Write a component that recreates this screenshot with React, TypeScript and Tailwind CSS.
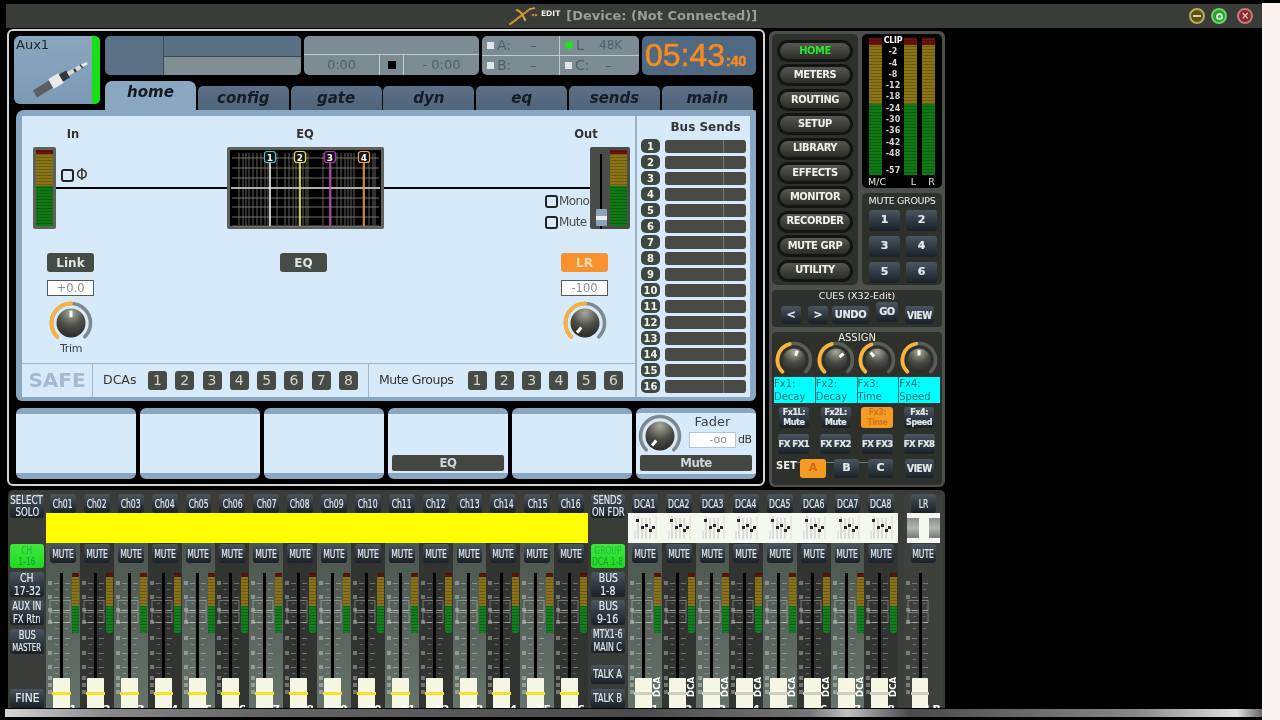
import React from "react";

const btn = "flex items-center justify-center rounded-[3px] bg-linear-to-b from-[#4a5660] to-[#1a2027] text-[#e3e8ea] text-center [-webkit-text-stroke:0.2px_#e3e8ea]";
const narrow = "scale-x-[0.64] whitespace-nowrap";
const cond = "font-stretch-condensed tracking-[-0.4px] whitespace-nowrap";
const greyBlock = "bg-linear-to-b from-[#8a8f8c] via-[#b3b6b0] to-[#777b78]";

function polar(c: number, r: number, deg: number) {
    const a = ((deg - 90) * Math.PI) / 180;
    return { x: c + r * Math.cos(a), y: c + r * Math.sin(a) };
}

function arc(c: number, r: number, from: number, to: number) {
    const p1 = polar(c, r, from);
    const p2 = polar(c, r, to);
    const large = to - from > 180 ? 1 : 0;
    return `M${p1.x} ${p1.y}A${r} ${r} 0 ${large} 1 ${p2.x} ${p2.y}`;
}

function Knob({ size = 44, pointer, orangeTo, track = "#7f8a8e" }: { size?: number; pointer: number; orangeTo?: number; track?: string }) {
    const c = size / 2;
    const outer = c - 2.5;
    const inner = outer - 5;
    const p1 = polar(c, inner * 0.4, pointer);
    const p2 = polar(c, inner * 0.85, pointer);
    return (
        <svg width={size} height={size} viewBox={`0 0 ${size} ${size}`} className="block shrink-0">
            <defs>
                <radialGradient id="knobFill" cx="50%" cy="15%" r="85%">
                    <stop offset="0%" stopColor="#a9a99b" />
                    <stop offset="55%" stopColor="#4b4c46" />
                    <stop offset="100%" stopColor="#2a2b28" />
                </radialGradient>
            </defs>
            <path d={arc(c, outer, -135, 135)} fill="none" stroke={track} strokeWidth={3.6} strokeLinecap="round" />
            {orangeTo !== undefined && <path d={arc(c, outer, -135, orangeTo)} fill="none" stroke="#f8b33e" strokeWidth={3.8} strokeLinecap="round" />}
            <circle cx={c} cy={c} r={inner} fill="url(#knobFill)" />
            <line x1={p1.x} y1={p1.y} x2={p2.x} y2={p2.y} stroke="#fff" strokeWidth={3} />
        </svg>
    );
}

function MeterBar({ className, low }: { className: string; low?: boolean }) {
    return (
        <div className={`relative ${className} ${low ? "bg-[linear-gradient(#5e140c_0_7%,#8a7416_7%_55%,#12801c_55%_100%)]" : "bg-[linear-gradient(#6b120c_0_5%,#8a7416_5%_48%,#0f7a14_48%_100%)]"}`}>
            <div className="absolute inset-0 bg-[repeating-linear-gradient(0deg,transparent_0_2px,rgba(0,0,0,0.22)_2px_3px)]" />
        </div>
    );
}

function Jack() {
    return (
        <svg width="60" height="44" viewBox="0 0 60 44" className="block">
            <line x1="5" y1="40" x2="21" y2="30" stroke="#5a5f62" strokeWidth="8" />
            <line x1="21" y1="30" x2="31" y2="24" stroke="#e9ebeb" strokeWidth="11" />
            <line x1="31" y1="24" x2="38" y2="20" stroke="#34383a" strokeWidth="8" />
            <line x1="38" y1="20" x2="50" y2="13" stroke="#d8dadb" strokeWidth="4" />
            <line x1="50" y1="13" x2="57" y2="9" stroke="#eceded" strokeWidth="3" />
            <line x1="44" y1="17" x2="46" y2="16" stroke="#333" strokeWidth="4" />
            <line x1="51" y1="13" x2="52" y2="12" stroke="#333" strokeWidth="4" />
        </svg>
    );
}

function Logo() {
    return (
        <svg width="30" height="18" viewBox="0 0 30 18" className="block">
            <path d="M1 17C7 13 14 7 21 2" fill="none" stroke="#c8922e" strokeWidth="2" strokeLinecap="round" />
            <path d="M8 3C12 4 14 8 16 13" fill="none" stroke="#d89f35" strokeWidth="2.2" strokeLinecap="round" />
            <path d="M21 2L26 1" stroke="#e0a83c" strokeWidth="1.4" />
            <circle cx="24" cy="8" r="1.3" fill="#b88a3a" />
            <circle cx="27" cy="8" r="1.3" fill="#b88a3a" />
        </svg>
    );
}

function EqGraph() {
    const hLines = [8, 18, 28, 48, 57, 67, 76];
    const vLines = [12, 16, 19, 22, 26, 30, 34, 38, 41, 50, 58, 62, 66, 69, 72, 76, 79, 81, 96, 104, 110, 114, 118, 121, 124, 127, 136, 142, 146, 148];
    const bands = [
        { x: 43, n: "1", box: "#3cc8d0", line: "#f4f4f0" },
        { x: 73, n: "2", box: "#e8df4a", line: "#f0ec50" },
        { x: 103, n: "3", box: "#c030c0", line: "#d040d0" },
        { x: 137, n: "4", box: "#f5a34c", line: "#f59a30" },
    ];
    return (
        <svg width="157" height="82" viewBox="0 0 157 82" className="block shrink-0 rounded-[2px]">
            <rect width="157" height="82" fill="#5e615c" />
            <rect x="3" y="3" width="151" height="76" fill="#000" />
            {vLines.map((x) => (
                <line key={x} x1={x} y1="6" x2={x} y2="78" stroke="#77786a" strokeWidth="0.8" />
            ))}
            {hLines.map((y) => (
                <line key={y} x1="5" y1={y + 3} x2="152" y2={y + 3} stroke="#8d8e80" strokeWidth="0.8" />
            ))}
            <line x1="4" y1="41" x2="153" y2="41" stroke="#b0b0a6" strokeWidth="2" />
            {bands.map((b) => (
                <g key={b.n}>
                    <line x1={b.x} y1="14" x2={b.x} y2="79" stroke={b.line} strokeWidth="1.6" />
                    <rect x={b.x - 5.5} y="4.5" width="11" height="11" rx="2.5" fill="#111" stroke={b.box} strokeWidth="1.2" />
                    <text x={b.x} y="13.5" textAnchor="middle" fontSize="9" fontWeight="700" fill="#fff" fontFamily="DejaVu Sans, sans-serif">{b.n}</text>
                </g>
            ))}
        </svg>
    );
}

function NumBadge({ n }: { n: number }) {
    return <span className="flex h-[19px] w-[19px] items-center justify-center rounded-[3px] bg-[#474b46] text-[14px] text-[#d4d6cc]">{n}</span>;
}

function Card({ children }: { children?: React.ReactNode }) {
    return (
        <div className="flex h-[71px] w-[120px] flex-col justify-end rounded-[6px] border-y-[6px] border-y-[#8ba6c1] bg-[#d7eafa] px-[4px] pb-[2px]">
            {children}
        </div>
    );
}

function BarButton({ label }: { label: string }) {
    return <div className="flex h-[16px] w-[112px] items-center justify-center rounded-[2px] bg-[#44463f] text-[13px] font-bold tracking-[-0.5px] text-[#cdd7dd] font-stretch-condensed">{label}</div>;
}

function MainPanel() {
    const tabs = ["config", "gate", "dyn", "eq", "sends", "main"];
    return (
        <div className="h-[457px] w-[758px] shrink-0 rounded-[6px] border-2 border-[#d0d5d5] bg-black pl-[5px] pt-[5px]">
            <div className="flex h-[74px]">
                <div className="flex h-[68px] w-[86px] rounded-[6px] bg-linear-to-b from-[#8ba6bf] to-[#7d9ab5]">
                    <div className="w-[78px] pl-[2px] pt-[1px]">
                        <div className="text-[13px] leading-[15px] text-[#1c242c]">Aux1</div>
                        <div className="ml-[14px] mt-[2px]"><Jack /></div>
                    </div>
                    <div className="w-[8px] rounded-r-[5px] bg-[#18e018]" />
                </div>
                <div className="ml-[5px] flex flex-col">
                    <div className="flex h-[39px] gap-[3px]">
                        <div className="flex w-[196px] overflow-hidden rounded-[5px] bg-[#5b7186]">
                            <div className="w-[58px]" />
                            <div className="flex flex-1 flex-col border-l border-[#3c4a58]">
                                <div className="h-[20px] bg-[#5a7085]" />
                                <div className="h-[1px] bg-[#3a4755]" />
                                <div className="flex-1 bg-[#808f94]" />
                            </div>
                        </div>
                        <div className="flex w-[175px] flex-col overflow-hidden rounded-[5px] bg-[#7b8d92]">
                            <div className="h-[19px] border-b border-[#c2caca]" />
                            <div className="flex flex-1 items-center text-[13px] text-[#525f63]">
                                <span className="w-[75px] text-center">0:00</span>
                                <span className="flex h-full w-[25px] items-center justify-center border-x border-[#c2caca]"><span className="h-[8px] w-[8px] bg-black" /></span>
                                <span className="flex-1 text-center">- 0:00</span>
                            </div>
                        </div>
                        <div className="grid w-[157px] grid-cols-[78px_1fr] grid-rows-2 overflow-hidden rounded-[5px] bg-[#7b8d92] text-[14px] text-[#4e6068]">
                            <div className="flex items-center gap-[3px] border-b border-r border-[#c2caca] pl-[5px]"><span className="h-[7px] w-[7px] bg-[#dfe5e8]" /><span className="w-[30px]">A:</span><span>–</span></div>
                            <div className="flex items-center gap-[3px] border-b border-[#c2caca] pl-[5px]"><span className="h-[8px] w-[8px] rounded-full bg-[#1fe01f]" /><span className="w-[20px]">L</span><span className="text-[12px]">48K</span></div>
                            <div className="flex items-center gap-[3px] border-r border-[#c2caca] pl-[5px]"><span className="h-[7px] w-[7px] bg-[#dfe5e8]" /><span className="w-[30px]">B:</span><span>–</span></div>
                            <div className="flex items-center gap-[3px] pl-[5px]"><span className="h-[7px] w-[7px] bg-[#dfe5e8]" /><span className="w-[27px]">C:</span><span>–</span></div>
                        </div>
                        <div className="flex w-[114px] items-baseline rounded-[5px] bg-[#4f6982] pl-[3px] font-['Liberation_Sans',sans-serif] text-[32px] leading-[38px] text-[#fb8a1c] [-webkit-text-stroke:0.5px_#fb8a1c]">
                            05:43<span className="ml-[1px] text-[14px] font-bold">:40</span>
                        </div>
                    </div>
                    <div className="mt-[6px] flex h-[29px] items-end gap-[1.8px] text-[15px] font-bold italic">
                        <div className="flex h-[29px] w-[91px] items-center justify-center rounded-t-[7px] bg-[#8aa7c2] pb-[6px] text-[#15191f]">home</div>
                        {tabs.map((t) => (
                            <div key={t} className="flex h-[24px] w-[91px] items-center justify-center rounded-t-[5px] bg-linear-to-b from-[#5b7187] to-[#4f6479] text-[#141d27]">{t}</div>
                        ))}
                    </div>
                </div>
            </div>

            <div className="ml-[2px] flex h-[291px] w-[740px] rounded-b-[6px] rounded-tl-[8px] rounded-tr-[2px] bg-[#8aa7c2] pb-[4px] pl-[6px] pr-[6px] pt-[6px]">
                <div className="flex w-[613px] flex-col bg-[#d7eafa] text-[#333]">
                    <div className="h-[247px] pt-[10px]">
                        <div className="flex h-[16px] items-center text-[11.5px] font-bold leading-[16px]">
                            <span className="w-[102px] text-center">In</span>
                            <span className="ml-[130px] w-[102px] text-center">EQ</span>
                            <span className="ml-[190px] w-[80px] text-center">Out</span>
                        </div>
                        <div className="mt-[5px] flex h-[82px] items-center pl-[11px] pr-[5px]">
                            <div className="h-[82px] w-[23px] shrink-0 rounded-[2px] bg-[#5e615c] p-[3px]"><MeterBar className="h-full w-full" /></div>
                            <div className="relative h-[2px] w-[171px] bg-black">
                                <div className="absolute left-[5px] top-[-18px] flex items-center gap-[2px]">
                                    <span className="h-[13px] w-[13px] rounded-[3px] border-2 border-[#222]" />
                                    <span className="text-[15px] leading-[13px]">Φ</span>
                                </div>
                            </div>
                            <EqGraph />
                            <div className="relative h-[2px] w-[206px] bg-black">
                                <div className="absolute left-[161px] top-[8px] flex flex-col gap-[8px] text-[12px] leading-[13px] tracking-[-0.6px] text-[#4a4a4a]">
                                    <div className="flex items-center gap-px"><span className="h-[13px] w-[13px] rounded-[3px] border-2 border-[#222]" />Mono</div>
                                    <div className="flex items-center gap-px"><span className="h-[13px] w-[13px] rounded-[3px] border-2 border-[#222]" />Mute</div>
                                </div>
                            </div>
                            <div className="relative flex h-[82px] w-[40px] shrink-0 rounded-[2px] bg-[#4a4c48] pl-[10px] pr-[3px] pt-[3px]">
                                <div className="mt-[4px] h-[75px] w-[2px] bg-black" />
                                <div className="absolute left-[6px] top-[62px] flex h-[17px] w-[11px] items-center rounded-[1px] bg-[#8ba3bd]"><span className="h-[4px] w-full bg-[#e8eef4]" /></div>
                                <MeterBar className="ml-[8px] h-[76px] w-[17px]" />
                            </div>
                        </div>
                        <div className="mt-[24px] flex pl-[25px] text-[12px] font-bold">
                            <span className="flex h-[19px] w-[47px] items-center justify-center rounded-[3px] bg-[#474b46] text-[#dfe4e4]">Link</span>
                            <span className="ml-[186px] flex h-[19px] w-[47px] items-center justify-center rounded-[3px] bg-[#474b46] text-[#dfe4e4]">EQ</span>
                            <span className="ml-[234px] flex h-[19px] w-[47px] items-center justify-center rounded-[3px] bg-[#f8922e] text-[#fbd9b0]">LR</span>
                        </div>
                        <div className="mt-[8px] flex pl-[25px] text-[11.5px] leading-[14px] text-[#8a9096]">
                            <span className="h-[16px] w-[47px] border border-[#56595c] bg-white text-center">+0.0</span>
                            <span className="ml-[467px] h-[16px] w-[47px] border border-[#56595c] bg-white text-center">-100</span>
                        </div>
                        <div className="mt-[5px] flex pl-[27px]">
                            <div className="flex flex-col items-center">
                                <Knob pointer={0} orangeTo={0} />
                                <span className="-mt-[2px] text-[11px] leading-[12px] tracking-[-0.3px] text-[#3a4248]">Trim</span>
                            </div>
                            <div className="ml-[470px]"><Knob pointer={-140} orangeTo={0} /></div>
                        </div>
                    </div>
                    <div className="flex h-[34px] items-center border-t border-[#a0b6c9] text-[12.5px] text-[#333]">
                        <div className="h-full w-[70px] text-center text-[20px] font-bold leading-[33px] text-[#a4bad0]">SAFE</div>
                        <div className="flex h-full w-[277px] items-center border-x border-[#a0b6c9] pl-[10px] pr-[10px]">
                            DCAs
                            <div className="ml-auto flex gap-[8.3px]">{[1, 2, 3, 4, 5, 6, 7, 8].map((n) => <NumBadge key={n} n={n} />)}</div>
                        </div>
                        <div className="flex h-full flex-1 items-center pl-[10px] pr-[12px]">
                            <span className="tracking-[-0.5px]">Mute Groups</span>
                            <div className="ml-auto flex gap-[8.3px]">{[1, 2, 3, 4, 5, 6].map((n) => <NumBadge key={n} n={n} />)}</div>
                        </div>
                    </div>
                </div>
                <div className="w-[2px] bg-[#9ab3c9]" />
                <div className="flex-1 bg-[#d7eafa] pl-[4px] pt-[3px]">
                    <div className="pl-[20px] text-center text-[12px] font-bold leading-[17px] text-[#333]">Bus Sends</div>
                    <div className="mt-[3px] flex flex-col gap-[2px]">
                        {Array.from({ length: 16 }, (_, i) => (
                            <div key={i} className="flex h-[14px] items-center gap-[5px]">
                                <span className="flex h-[14px] w-[19px] items-center justify-center rounded-[5px] bg-[#3d4842] text-[10px] font-bold text-[#eef0ea]">{i + 1}</span>
                                <span className="flex h-[13px] w-[81px] justify-end rounded-[3px] bg-[#474a45] pr-[22px]"><span className="h-full w-px bg-[#75786f]" /></span>
                            </div>
                        ))}
                    </div>
                </div>
            </div>

            <div className="ml-[2px] mt-[7px] flex gap-[4px]">
                <Card />
                <Card />
                <Card />
                <Card><BarButton label="EQ" /></Card>
                <Card />
                <div className="flex h-[71px] w-[120px] flex-col rounded-[6px] border-y-[5px] border-y-[#8ba6c1] bg-[#d7eafa] px-[4px] pb-[2px]">
                    <div className="flex h-[42px]">
                        <div className="-ml-[2px] mt-[1px] h-[40px] overflow-hidden"><Knob size={44} pointer={-140} /></div>
                        <div className="ml-[7px] flex flex-col">
                            <span className="w-[47px] text-center text-[13px] leading-[17px] text-[#3a4046]">Fader</span>
                            <div className="mt-[2px] flex items-center gap-[2px]">
                                <span className="h-[16px] w-[47px] border border-[#b9c6d0] bg-white pr-[8px] text-right text-[11px] leading-[14px] text-[#8a8f92]">-oo</span>
                                <span className="text-[11px] tracking-[-0.5px] text-[#333]">dB</span>
                            </div>
                        </div>
                    </div>
                    <BarButton label="Mute" />
                </div>
            </div>
        </div>
    );
}

const navItems = ["HOME", "METERS", "ROUTING", "SETUP", "LIBRARY", "EFFECTS", "MONITOR", "RECORDER", "MUTE GRP", "UTILITY"];
const scaleLabels = ["-2", "-4", "-8", "-12", "-18", "-24", "-30", "-36", "-42", "-48"];

function ControlPanel() {
    return (
        <div className="ml-[4px] mt-[2px] h-[456px] w-[176px] shrink-0 rounded-[6px] bg-[#4b504b] p-[3px]">
            <div className="flex gap-[4px]">
                <div className="flex h-[251px] w-[86px] flex-col items-center gap-[2.4px] rounded-[5px] bg-[#2e302c] pt-[6px]">
                    {navItems.map((item, i) => (
                        <div key={item} className={`flex h-[22px] w-[76px] items-center justify-center rounded-[11px] border-[3px] border-[#141512] bg-linear-to-b from-[#565850] to-[#2b2c28] text-[11px] font-bold tracking-[-0.4px] font-stretch-condensed whitespace-nowrap ${i === 0 ? "text-[#29e82b]" : "text-[#f2f2ec]"}`}>{item}</div>
                    ))}
                </div>
                <div className="w-[80px]">
                    <div className="h-[154px] rounded-[5px] bg-black pl-[7px] pt-[4px]">
                        <div className="flex h-[137px]">
                            <MeterBar className="h-full w-[13px]" />
                            <div className="-mt-[3px] flex h-[140px] w-[22px] flex-col items-center text-[8px] font-bold leading-[11.3px] text-[#d6d8d0]">
                                <span className="text-[8px] tracking-[-0.3px] text-white">CLIP</span>
                                {scaleLabels.map((s) => <span key={s}>{s}</span>)}
                                <span className="mt-[6px]">-57</span>
                            </div>
                            <MeterBar className="h-full w-[13px]" />
                            <MeterBar className="ml-[5px] h-full w-[13px]" />
                        </div>
                        <div className="flex text-[9.5px] leading-[13px] text-[#e8e8e0]">
                            <span className="-ml-[1px] w-[20px]">M/C</span>
                            <span className="ml-[19px] w-[13px] text-center">L</span>
                            <span className="ml-[5px] w-[13px] text-center">R</span>
                        </div>
                    </div>
                    <div className="mt-[5px] h-[92px] rounded-[5px] bg-[#2e302c] pl-[7px]">
                        <div className="-ml-[6px] w-[78px] pt-[2px] text-center text-[9.5px] leading-[12px] tracking-[-0.3px] text-[#f0f0e8]">MUTE GROUPS</div>
                        <div className="mt-[3px] grid grid-cols-[31px_31px] gap-x-[6px] gap-y-[5px]">
                            {[1, 2, 3, 4, 5, 6].map((n) => <div key={n} className={`${btn} h-[21px] text-[11px] font-bold`}>{n}</div>)}
                        </div>
                    </div>
                </div>
            </div>

            <div className="mt-[5px] h-[37px] w-[170px] rounded-[4px] bg-[#2e302c]">
                <div className="text-center text-[9.5px] leading-[12px] text-[#f0f0e8]">CUES (X32-Edit)</div>
                <div className="flex h-[22px] items-end pl-[9px] text-[11px] font-bold">
                    <div className={`${btn} h-[18px] w-[20px]`}>&lt;</div>
                    <div className={`${btn} ml-[7px] h-[18px] w-[20px]`}>&gt;</div>
                    <div className={`${btn} ml-[4px] h-[18px] w-[37px] ${cond}`}>UNDO</div>
                    <div className={`${btn} ml-[7px] h-[20px] w-[22px] self-start ${cond}`}>GO</div>
                    <div className={`${btn} ml-[7px] h-[18px] w-[29px] ${cond} text-[10px]`}>VIEW</div>
                </div>
            </div>

            <div className="mt-[5px] h-[153px] w-[170px] rounded-[4px] bg-[#2e302c]">
                <div className="text-center text-[10px] leading-[12px] text-[#f0f0e8]">ASSIGN</div>
                <div className="-mt-[3px] grid h-[36px] w-[168px] grid-cols-4 justify-items-center overflow-hidden pl-[1px]">
                    <Knob size={38} pointer={20} orangeTo={-15} track="#5a5c58" />
                    <Knob size={38} pointer={50} orangeTo={-15} track="#5a5c58" />
                    <Knob size={38} pointer={-40} orangeTo={-20} track="#5a5c58" />
                    <Knob size={38} pointer={0} orangeTo={-10} track="#5a5c58" />
                </div>
                <div className="mx-[2px] grid h-[26px] w-[166px] grid-cols-4 gap-x-px bg-[#1a6a70] text-[10px] leading-[13px] text-[#137079]">
                    {[["Fx1:", "Decay"], ["Fx2:", "Decay"], ["Fx3:", "Time"], ["Fx4:", "Speed"]].map(([a, b]) => (
                        <div key={a} className="bg-[#00ffff]"><div>{a}</div><div>{b}</div></div>
                    ))}
                </div>
                <div className="mt-[4px] grid w-[168px] grid-cols-4 justify-items-center pl-[1px] text-[8px] font-bold leading-[10px] tracking-[-0.4px]">
                    <div className={`${btn} h-[21px] w-[30px] flex-col`}><span>Fx1L:</span><span>Mute</span></div>
                    <div className={`${btn} h-[21px] w-[30px] flex-col`}><span>Fx2L:</span><span>Mute</span></div>
                    <div className="flex h-[21px] w-[32px] flex-col items-center justify-center rounded-[3px] bg-[#f59a23] text-[#cc7a1c]"><span>Fx3:</span><span>Time</span></div>
                    <div className={`${btn} h-[21px] w-[30px] flex-col`}><span>Fx4:</span><span>Speed</span></div>
                </div>
                <div className="mt-[6px] grid w-[168px] grid-cols-4 justify-items-center pl-[1px] text-[9.5px] font-bold tracking-[-0.5px]">
                    {["FX FX1", "FX FX2", "FX FX3", "FX FX8"].map((t) => <div key={t} className={`${btn} h-[20px] w-[31px] whitespace-nowrap font-stretch-condensed`}>{t}</div>)}
                </div>
                <div className="mt-[5px] flex items-center text-[11px] font-bold">
                    <span className="ml-[4px] w-[20px] self-start text-[10px] leading-[13px] text-[#eeeeea]">SET</span>
                    <span className="-mt-[12px] h-px w-[4px] bg-[#777]" />
                    <div className="flex h-[19px] w-[26px] items-center justify-center rounded-[3px] bg-[#f59a23] text-[#c9691c]">A</div>
                    <span className="-mt-[12px] h-px w-[8px] bg-[#777]" />
                    <div className={`${btn} h-[19px] w-[25px]`}>B</div>
                    <span className="-mt-[12px] h-px w-[9px] bg-[#777]" />
                    <div className={`${btn} h-[19px] w-[25px]`}>C</div>
                    <div className={`${btn} ml-[12px] h-[19px] w-[29px] text-[10px] ${cond}`}>VIEW</div>
                </div>
            </div>
        </div>
    );
}

function Scale() {
    const ys = [20, 34, 47, 59, 75, 90, 104, 115, 122, 129];
    return (
        <svg width="34" height="145" viewBox="0 0 34 145" className="pointer-events-none absolute left-0 top-0">
            <g fill="#ffffff" opacity="0.32">
                {ys.map((y) => (
                    <g key={y}>
                        <rect x="2" y={y - 2} width="4" height="4" />
                        <rect x="8" y={y} width="5" height="1" />
                        <rect x="19" y={y} width="5" height="1" />
                        <rect x="9" y={y + 6} width="3" height="1" opacity="0.7" />
                        <rect x="19" y={y + 6} width="3" height="1" opacity="0.7" />
                    </g>
                ))}
            </g>
            <g fill="none" stroke="#ffffff" opacity="0.32">
                <rect x="4" y="37.5" width="20" height="10" />
                <rect x="4" y="49.5" width="20" height="10" />
            </g>
        </svg>
    );
}

function Strip({ label, n, kind, light }: { label: string; n: string; kind: "ch" | "dca"; light: boolean }) {
    return (
        <div className="flex min-w-0 flex-1 flex-col">
            <div className={`${btn} mx-[4px] h-[19px] text-[12px]`}><span className={narrow}>{label}</span></div>
            {kind === "ch" ? (
                <div className="h-[30px] bg-[#ffff00]" />
            ) : (
                <div className="h-[30px] bg-[#f5f8ee]">
                    <svg width="34" height="30" viewBox="0 0 34 30" className="block">
                        <g stroke="#9aa0a0" strokeWidth="0.6">
                            <line x1="10" y1="3" x2="10" y2="26" />
                            <line x1="14" y1="5" x2="14" y2="26" />
                            <line x1="18" y1="5" x2="18" y2="26" />
                            <line x1="22" y1="5" x2="22" y2="26" />
                            <line x1="7" y1="18" x2="7" y2="26" stroke="#9db8e0" />
                            <line x1="28" y1="3" x2="28" y2="26" stroke="#c8d0c8" />
                        </g>
                        <g fill="#2b2b2b">
                            <rect x="8" y="6" width="3" height="3" />
                            <rect x="13" y="13" width="3" height="3" />
                            <rect x="17" y="11" width="3" height="3" />
                            <rect x="21" y="16" width="3" height="3" />
                            <rect x="24" y="13" width="3" height="3" />
                        </g>
                    </svg>
                </div>
            )}
            <div className={`flex flex-1 flex-col ${light ? "bg-linear-to-b from-[#4c564f] to-[#66736a]" : "bg-[#323431]"}`}>
                <div className={`${btn} mx-[4px] mt-[1px] h-[19px] text-[12px]`}><span className={narrow}>MUTE</span></div>
                <div className="relative flex h-[145px] overflow-hidden pt-[10px]">
                    <Scale />
                    <div className="relative ml-[14px] h-[105px] w-[3px] shrink-0 bg-black" />
                    <div className="relative ml-[9px] h-[60px] w-[7px] shrink-0 overflow-hidden rounded-[2px] bg-black">
                        <MeterBar low className="h-full w-full" />
                    </div>
                    <div className="absolute bottom-0 left-[7px] h-[30px] w-[17px] rounded-t-[1px] bg-[#f6f6e4]">
                        <div className={`absolute left-[-1px] right-[-1px] top-[14px] h-[3px] ${kind === "ch" ? "bg-[#f2e22a]" : "bg-[#cfcfc0]"}`} />
                    </div>
                    {kind === "dca" && (
                        <span className="absolute bottom-[11px] left-[25px] text-[8.5px] font-bold leading-[9px] text-white [writing-mode:vertical-rl] rotate-180">DCA</span>
                    )}
                    <span className="absolute bottom-[-8px] right-[3px] text-[11px] font-bold leading-[12px] text-white">{n}</span>
                </div>
            </div>
        </div>
    );
}

function SideBtn({ top, bottom, className = "", scale = "scale-x-[0.78]", bottomClass = "" }: { top: string; bottom?: string; className?: string; scale?: string; bottomClass?: string }) {
    return (
        <div className={`${btn} w-[34px] flex-col text-[12px] leading-[12.5px] ${className}`}>
            <span className={`${scale} whitespace-nowrap`}>{top}</span>
            {bottom && <span className={`${scale} whitespace-nowrap ${bottomClass}`}>{bottom}</span>}
        </div>
    );
}

function GreenBtn({ top, bottom }: { top: string; bottom: string }) {
    return (
        <div className="flex h-[24px] w-[34px] flex-col items-center justify-center rounded-[3px] bg-linear-to-b from-[#3cea3c] to-[#1fd820] text-[10.5px] leading-[11.5px]">
            <span className="scale-x-[0.72] whitespace-nowrap text-[#2cae44]">{top}</span>
            <span className="scale-x-[0.72] whitespace-nowrap text-[#169a3a]">{bottom}</span>
        </div>
    );
}

function Mixer() {
    const chs = Array.from({ length: 16 }, (_, i) => i + 1);
    const dcas = [1, 2, 3, 4, 5, 6, 7, 8];
    return (
        <div className="ml-[2px] mt-[2px] flex h-[218px] w-[937px] rounded-t-[5px] bg-[#3a3c38] pt-[4px]">
            <div className="flex w-[38px] shrink-0 flex-col pl-[2px]">
                <SideBtn top="SELECT" bottom="SOLO" scale="scale-x-[0.72]" className="h-[24px] text-[11.5px]" />
                <div className="mt-[26px]"><GreenBtn top="CH" bottom="1-16" /></div>
                <SideBtn top="CH" bottom="17-32" className="mt-[4px] h-[25px]" />
                <SideBtn top="AUX IN" bottom="FX Rtn" scale="scale-x-[0.7]" className="mt-[3px] h-[25px] text-[11px]" />
                <SideBtn top="BUS" bottom="MASTER" bottomClass="text-[10px]" scale="scale-x-[0.7]" className="mt-[4px] h-[25px]" />
                <SideBtn top="FINE" scale="scale-x-[0.9]" className="mt-auto h-[19px] text-[11.5px]" />
            </div>
            <div className="flex w-[542px] shrink-0">
                {chs.map((n) => <Strip key={n} label={`Ch${String(n).padStart(2, "0")}`} n={String(n)} kind="ch" light={n % 2 === 1} />)}
            </div>
            <div className="flex w-[40px] shrink-0 flex-col items-center">
                <SideBtn top="SENDS" bottom="ON FDR" scale="scale-x-[0.7]" className="h-[24px] text-[11.5px]" />
                <div className="mt-[26px]"><GreenBtn top="GROUP" bottom="DCA 1-8" /></div>
                <SideBtn top="BUS" bottom="1-8" className="mt-[4px] h-[25px]" />
                <SideBtn top="BUS" bottom="9-16" className="mt-[3px] h-[25px]" />
                <SideBtn top="MTX1-6" bottom="MAIN C" scale="scale-x-[0.65]" className="mt-[3px] h-[25px] text-[11px]" />
                <SideBtn top="TALK A" scale="scale-x-[0.7]" className="mt-auto h-[19px] text-[11.5px]" />
                <SideBtn top="TALK B" scale="scale-x-[0.7]" className="mt-[5px] h-[19px] text-[11.5px]" />
            </div>
            <div className="flex w-[270px] shrink-0">
                {dcas.map((n) => <Strip key={n} label={`DCA${n}`} n={String(n)} kind="dca" light={n % 2 === 1} />)}
            </div>
            <div className="ml-[6px] flex w-[39px] shrink-0 flex-col rounded-t-[4px] bg-[#3e403c]">
                <div className={`${btn} mx-[7px] h-[19px] text-[12px]`}><span className={narrow}>LR</span></div>
                <div className="mx-[3px] flex h-[30px] justify-between bg-[#f5f8ee] py-[5px]">
                    <div className={`w-[12px] ${greyBlock}`} />
                    <div className={`w-[11px] ${greyBlock}`} />
                </div>
                <div className={`${btn} mx-[7px] mt-[1px] h-[19px] text-[12px]`}><span className={narrow}>MUTE</span></div>
                <div className="relative flex h-[145px] overflow-hidden pt-[10px]">
                    <Scale />
                    <div className="relative ml-[15px] h-[105px] w-[3px] bg-black" />
                    <div className="absolute bottom-0 left-[8px] h-[30px] w-[16px] rounded-t-[1px] bg-[#f6f6e4]">
                        <div className="absolute left-[-1px] right-[-1px] top-[14px] h-[3px] bg-[#cfcfc0]" />
                    </div>
                    <span className="absolute bottom-[-8px] right-[2px] text-[11px] font-bold leading-[12px] text-white">LR</span>
                </div>
            </div>
        </div>
    );
}

export default function App() {
    return (
        <div className="flex h-[720px] w-[1280px] overflow-hidden bg-black font-['DejaVu_Sans',sans-serif] blur-[0.45px]">
            <div className="w-[1262px] shrink-0 pt-[4px]">
                <div className="ml-[6px] flex h-[24px] w-[1256px] items-center bg-[#3a3c38]">
                    <div className="ml-[503px]"><Logo /></div>
                    <span className="ml-[2px] -mt-[4px] text-[7.5px] font-bold text-[#f2f2ec]">EDIT</span>
                    <span className="ml-[6px] text-[13px] font-bold text-[#9a9e98]">[Device: (Not Connected)]</span>
                    <div className="ml-[432px] flex items-center">
                        <span className="flex h-[16px] w-[16px] items-center justify-center rounded-full border-2 border-[#b5ac5f] bg-[#5a5410]"><span className="h-[2px] w-[8px] bg-[#d8d2a0]" /></span>
                        <span className="ml-[6px] flex h-[16px] w-[16px] items-center justify-center rounded-full border-2 border-[#6fd06f] bg-[#2f9a2f]"><span className="h-[7px] w-[7px] rounded-full border-2 border-[#bdf0bd]" /></span>
                        <span className="ml-[10px] flex h-[16px] w-[16px] items-center justify-center rounded-full border-2 border-[#c87878] bg-[#8a2a30] text-[10px] font-bold leading-none text-[#f0c0c0]">×</span>
                    </div>
                </div>
                <div className="ml-[1px] mt-[1px] pl-[6px]">
                    <div className="flex h-[459px]">
                        <MainPanel />
                        <ControlPanel />
                    </div>
                    <div className="-ml-[1px]"><Mixer /></div>
                </div>
                <div className="ml-[5px] mt-[1px] h-[8px] bg-[linear-gradient(90deg,#d5d5d5,#8a8a8a_8%,#666_20%,#4a4a4a_50%,#777_64%,#c0c0c0_67%,#4a4a4a_72%,#888_90%,#e0e0e0_98%,#666)]" />
            </div>
            <div className="mt-[3px] flex-1 bg-[#fbf3f0]" />
        </div>
    );
}
